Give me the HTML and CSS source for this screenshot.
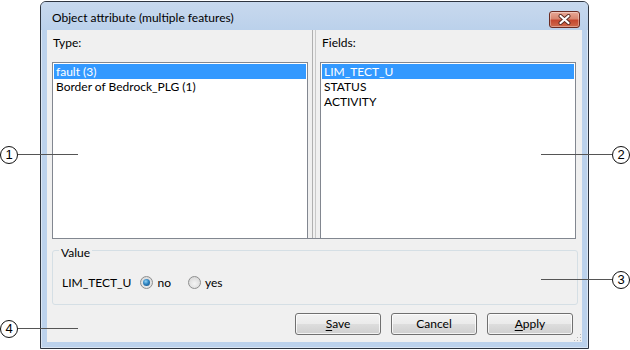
FILE: index.html
```html
<!DOCTYPE html>
<html>
<head>
<meta charset="utf-8">
<link rel="stylesheet" href="styles.css">
</head>
<body>
<div class="screen">
  <div class="window">
    <div class="titlebar">
      <span class="title">Object attribute (multiple features)</span>
      <span class="close">
        <svg width="13" height="11" viewBox="0 0 13 11">
          <path d="M2.5 2 L10.5 9 M10.5 2 L2.5 9" stroke="#5a2a22" stroke-width="4" stroke-linecap="round"/>
          <path d="M2.5 2 L10.5 9 M10.5 2 L2.5 9" stroke="#ffffff" stroke-width="2.2" stroke-linecap="round"/>
        </svg>
      </span>
    </div>
    <div class="client">
      <div class="panes">
        <div class="pane pane-left">
          <div class="pane-label">Type:</div>
          <ul class="listbox">
            <li class="selected">fault (3)</li>
            <li>Border of Bedrock_PLG (1)</li>
          </ul>
        </div>
        <div class="splitter"></div>
        <div class="pane pane-right">
          <div class="pane-label">Fields:</div>
          <ul class="listbox">
            <li class="selected">LIM_TECT_U</li>
            <li>STATUS</li>
            <li>ACTIVITY</li>
          </ul>
        </div>
      </div>
      <fieldset class="group">
        <legend>Value</legend>
        <div class="radio-row">
          <span class="field-name">LIM_TECT_U</span>
          <span class="radio checked"></span><span class="radio-label">no</span>
          <span class="radio"></span><span class="radio-label">yes</span>
        </div>
      </fieldset>
      <div class="buttons">
        <span class="btn"><u>S</u>ave</span>
        <span class="btn">Cancel</span>
        <span class="btn"><u>A</u>pply</span>
      </div>
      <div class="grip"></div>
    </div>
  </div>
  <div class="callout left c1"><span class="num">1</span><span class="line"></span></div>
  <div class="callout right c2"><span class="line"></span><span class="num">2</span></div>
  <div class="callout right c3"><span class="line"></span><span class="num">3</span></div>
  <div class="callout left c4"><span class="num">4</span><span class="line"></span></div>
</div>
</body>
</html>
```
FILE: styles.css
```css
* { box-sizing: border-box; }
html, body { margin: 0; padding: 0; background: #ffffff; }
body {
  font-family: "Lato", "Noto Sans", sans-serif;
  font-size: 12px;
  color: #000;
}
.screen {
  position: relative;
  width: 630px;
  height: 350px;
  padding: 1px 0 0 40px;
}
.window {
  width: 549px;
  height: 348px;
  border: 1px solid #2e3540;
  border-radius: 6px 6px 0 0;
  background: #bcd2ec;
  box-shadow: inset 0 0 0 1px rgba(255,255,255,0.45);
  padding: 0 6px 6px 6px;
  display: flex;
  flex-direction: column;
}
.titlebar {
  height: 28px;
  display: flex;
  align-items: flex-start;
  justify-content: space-between;
  background: linear-gradient(#c8d9ee, #bbd1eb);
  margin: 0 -6px;
  padding-left: 11px;
  padding-right: 8px;
  border-radius: 5px 5px 0 0;
}
.title {
  line-height: 16px;
  margin-top: 8px;
  color: #000;
}
.close {
  margin-top: 9px;
  width: 31px;
  height: 17px;
  border: 1px solid #6b2b22;
  border-radius: 3px;
  background: linear-gradient(#e8a896 0%, #d88670 45%, #c5472f 55%, #cf6a4c 100%);
  box-shadow: inset 0 0 0 1px rgba(255,255,255,0.35);
  display: flex;
  align-items: center;
  justify-content: center;
}
.client {
  position: relative;
  flex: 1;
  background: #f0f0f0;
  display: flex;
  flex-direction: column;
}
.panes {
  height: 209px;
  display: flex;
}
.pane {
  display: flex;
  flex-direction: column;
  padding-top: 5px;
}
.pane-left { width: 261px; padding-left: 5px; }
.pane-right { width: 260px; padding-right: 4px; }
.pane-label {
  line-height: 16px;
  height: 16px;
  margin-bottom: 11px;
  padding-left: 1px;
}
.pane-right .pane-label { padding-left: 2px; }
.splitter {
  width: 12px;
  border-bottom: 1px solid #828790;
  background: linear-gradient(to right, transparent 4px, #b0b0b0 4px 5px, transparent 5px 7px, #c8c8c8 7px 8px, transparent 8px);
}
.listbox {
  flex: 1;
  margin: 0;
  padding: 1px;
  list-style: none;
  background: #fff;
  border: 1px solid #828790;
}
.listbox li {
  height: 15px;
  line-height: 15px;
  padding-left: 2px;
  white-space: nowrap;
}
.listbox li.selected {
  background: #3399ff;
  color: #fff;
}
.group {
  margin: 0 4px 0 5px;
  padding: 0 9px 14px 9px;
  border: 1px solid #d5dfe5;
  border-radius: 3px;
  min-width: 0;
}
.group legend {
  padding: 6px 2px 0 2px;
  margin-left: -3px;
  line-height: 16px;
}
.radio-row {
  margin-top: 13px;
  height: 16px;
  display: flex;
  align-items: center;
}
.field-name { margin-right: 9px; }
.radio {
  position: relative;
  width: 13px;
  height: 13px;
  border-radius: 50%;
  border: 1px solid #8e8f8f;
  background: radial-gradient(circle at 50% 60%, #f4f4f4 0%, #dcdcdc 70%, #cfcfcf 100%);
  margin-right: 4px;
}
.radio.checked::after {
  content: "";
  position: absolute;
  left: 2px;
  top: 2px;
  width: 7px;
  height: 7px;
  border-radius: 50%;
  background: radial-gradient(circle at 40% 35%, #8fd2f5 0%, #2e83c0 45%, #174a7a 100%);
}
.radio-label { margin-right: 17px; }
.buttons {
  margin-top: 8px;
  display: flex;
  justify-content: flex-end;
  gap: 10px;
  padding-right: 9px;
}
.btn {
  width: 86px;
  height: 22px;
  border: 1px solid #707070;
  border-radius: 3px;
  background: linear-gradient(#f2f2f2 0%, #ebebeb 48%, #dddddd 52%, #cfcfcf 100%);
  box-shadow: inset 0 0 0 1px rgba(255,255,255,0.75);
  display: flex;
  align-items: center;
  justify-content: center;
  line-height: 16px;
}
.btn u { text-decoration-thickness: 1px; text-underline-offset: 2px; }
.grip {
  position: absolute;
  right: 1px;
  bottom: 1px;
  width: 8px;
  height: 8px;
  background:
    radial-gradient(circle, #b8b8b8 0.8px, transparent 1px) 0 0 / 3px 3px;
  clip-path: polygon(100% 0, 100% 100%, 0 100%);
}
.callout {
  position: absolute;
  display: flex;
  align-items: center;
  height: 17px;
}
.callout .num {
  width: 18px;
  height: 18px;
  border: 1px solid #111;
  border-radius: 50%;
  background: #fff;
  font-family: "Liberation Sans", Arial, sans-serif;
  font-size: 13px;
  line-height: 16px;
  text-align: center;
}
.callout .line {
  height: 1px;
  background: #555;
}
.callout.left .line { width: 60px; }
.callout.right .line { width: 71px; }
.c1 { left: 0; top: 146px; }
.c2 { left: 541px; top: 146px; }
.c3 { left: 541px; top: 271px; }
.c4 { left: 0; top: 320px; }
```
